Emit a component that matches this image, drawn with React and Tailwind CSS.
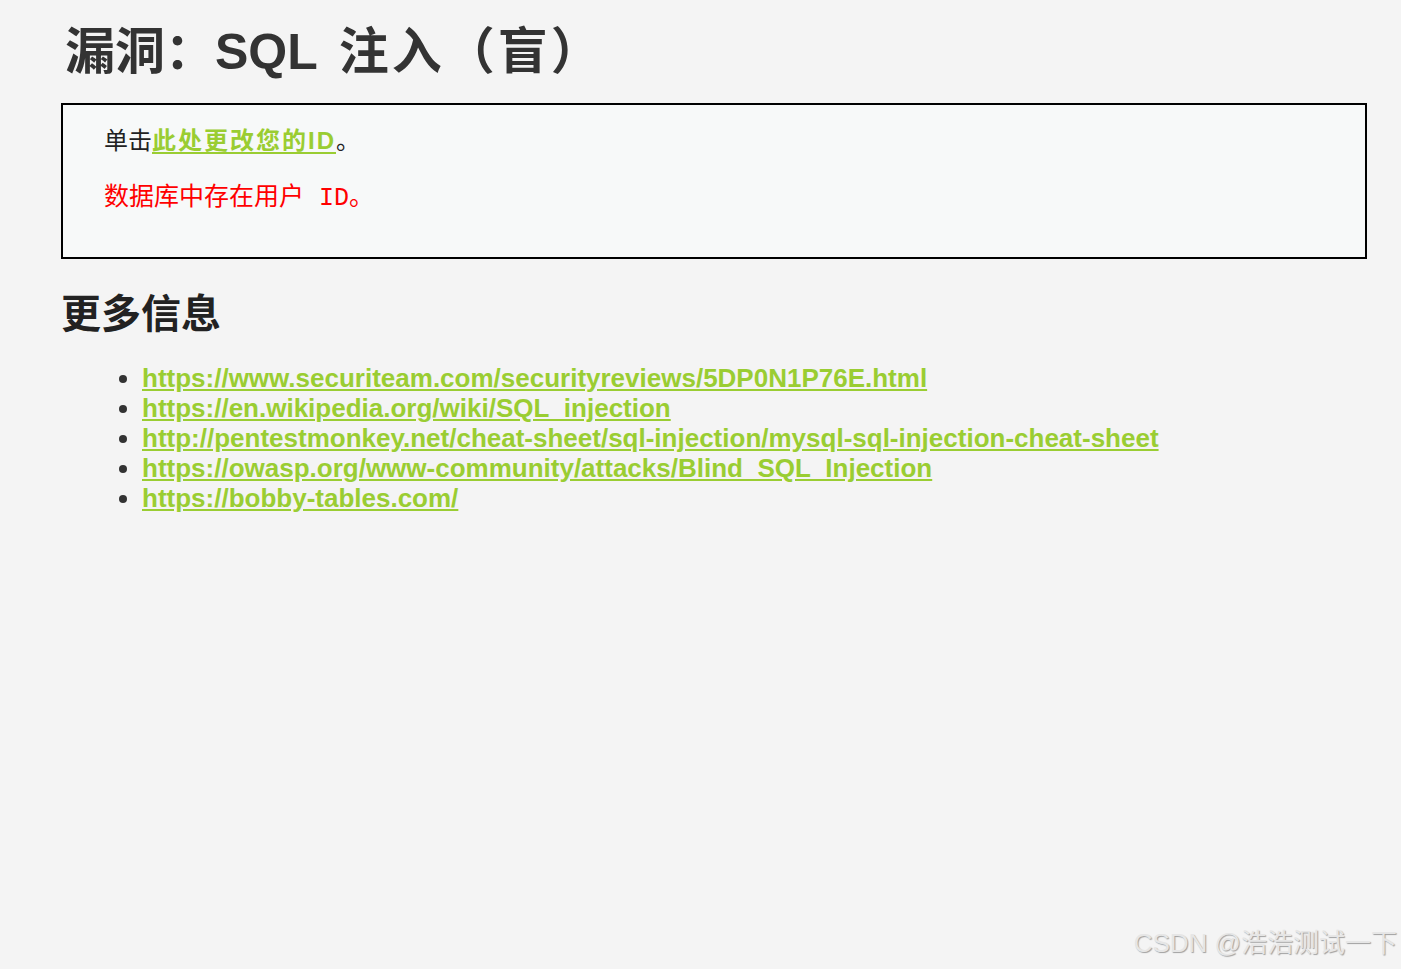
const links = [
  'https://www.securiteam.com/securityreviews/5DP0N1P76E.html',
  'https://en.wikipedia.org/wiki/SQL_injection',
  'http://pentestmonkey.net/cheat-sheet/sql-injection/mysql-sql-injection-cheat-sheet',
  'https://owasp.org/www-community/attacks/Blind_SQL_Injection',
  'https://bobby-tables.com/',
]

export default function App() {
  return (
    <div className="relative min-h-[969px] bg-[#f4f4f4] text-[#333] font-['Liberation_Sans','Noto_Sans_CJK_SC',sans-serif] pl-[61px] pr-[34px] pt-[21px]">
      <h1 className="text-[50px] leading-[62px] font-bold pl-[4px]">
        漏洞：SQL <span className="ml-[8px] tracking-[3px]">注入（盲）</span>
      </h1>

      <div className="mt-[20px] border-2 border-black bg-[#f7f9f9] pl-[41px] pt-[20px] pb-[42px]">
        <p className="text-[24px] leading-[32px] text-[#222]">
          单击
          <a href="#" className="text-[#9acd32] font-bold underline underline-offset-[3px] tracking-[2px]">此处更改您的ID</a>
          。
        </p>
        <p className="mt-[26px] text-[25px] leading-[32px] text-[#ff0000] font-['Liberation_Mono','Noto_Sans_CJK_SC',monospace]">
          数据库中存在用户 ID。
        </p>
      </div>

      <h2 className="mt-[31px] text-[40px] leading-[48px] font-bold text-[#222]">更多信息</h2>

      <ul className="mt-[25px] pl-[81px] list-disc marker:text-[#333]">
        {links.map(l => (
          <li key={l} className="text-[26px] leading-[30px]">
            <a href="#" className="text-[#9acd32] font-bold underline underline-offset-[2px]">{l}</a>
          </li>
        ))}
      </ul>

      <div className="absolute right-[4px] bottom-[10px] text-[26px] leading-[32px] text-[#e6e6e6] [text-shadow:1px_1px_1px_#a0a0a0]">
        CSDN @浩浩测试一下
      </div>
    </div>
  )
}
